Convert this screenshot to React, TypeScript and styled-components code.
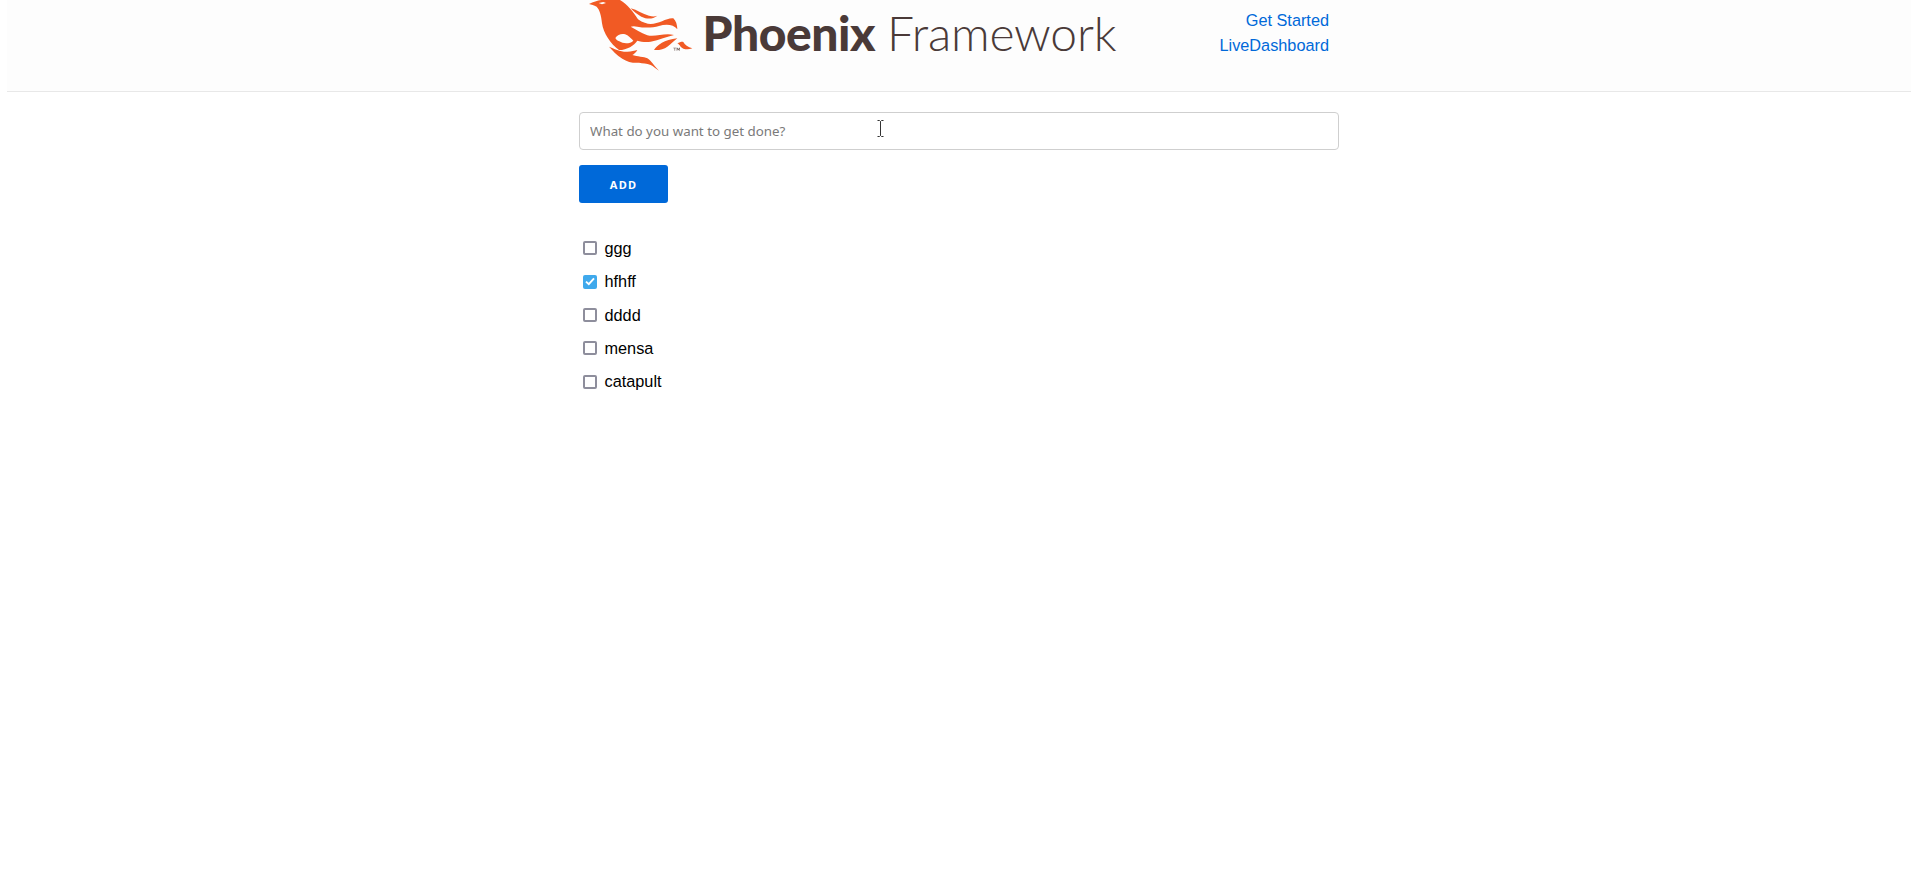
import React from 'react';
import styled, {createGlobalStyle} from 'styled-components';

const GlobalStyle = createGlobalStyle`
    html, body {
        margin: 0;
        padding: 0;
        background: #ffffff;
        font-family: "Liberation Sans", Arial, sans-serif;
    }
`;

const todos = [
    {id: 1, title: 'ggg', done: false},
    {id: 2, title: 'hfhff', done: true},
    {id: 3, title: 'dddd', done: false},
    {id: 4, title: 'mensa', done: false},
    {id: 5, title: 'catapult', done: false}
];

function Bird() {
    return (
        <BirdSvg viewBox="0 0 360 216">
            <g fill="#f15a24">
                {/* body, upper band and middle band */}
                <path d="M15 12 C28 6 40 2 52 0 L108 0 C130 12 148 36 162 58 C176 68 190 72 200 72 C225 72 250 52 268 55 C276 62 280 76 280 88 C268 72 245 72 225 78 C205 84 180 84 160 80 C152 78 146 78 140 80 C154 88 170 98 190 106 C215 112 240 98 270 105 C250 110 225 120 200 125 C185 127 170 125 160 122 C150 136 130 150 105 150 C80 132 58 100 54 70 C52 45 46 28 38 20 C30 16 22 14 15 12 Z" />
                <path d="M140 25 C160 30 175 42 195 47 C205 50 212 50 220 47 C205 58 190 58 172 50 C160 44 148 34 140 25 Z" />
                <path d="M210 150 C220 135 240 120 280 115 C270 122 262 132 250 140 C240 148 225 151 210 150 Z" />
                <path d="M280 130 C288 126 294 124 298 126 C302 134 312 142 325 145 C312 150 296 148 290 140 C287 136 284 132 280 130 Z" />
                <path d="M75 140 C90 146 110 156 130 155 C142 155 152 152 160 150 C156 158 150 162 145 165 C160 170 180 170 190 175 C202 182 210 198 225 212 C214 206 208 198 200 195 C188 190 176 190 165 188 C150 190 130 186 115 176 C98 166 86 152 75 140 Z" />
            </g>
            <path fill="#fdfdfd" d="M44 9 L58 6 L66 9 L54 13 Z" />
            <path fill="#fdfdfd" d="M94 114 C102 102 118 98 130 106 C138 112 144 118 148 122 C138 132 118 132 106 124 C100 122 96 118 94 114 Z" />
            <path fill="#6b5a55" d="M268 143 h9 v1.6 h-3.6 v7.4 h-1.8 v-7.4 h-3.6 Z M278 143 h2.4 l2.4 5 l2.4 -5 h2.4 v9 h-1.8 v-6 l-2.2 4.6 h-1.6 l-2.2 -4.6 v6 h-1.8 Z" />
        </BirdSvg>
    );
}

function ICursor() {
    return (
        <CursorSvg viewBox="0 0 7 17">
            <path d="M0.5 0.5 H2.5 L3.5 1.5 L4.5 0.5 H6.5 M3.5 1.5 V15.5 M0.5 16.5 H2.5 L3.5 15.5 L4.5 16.5 H6.5" fill="none" stroke="#333333" strokeWidth="1" />
        </CursorSvg>
    );
}

export default function App() {
    return (
        <>
            <GlobalStyle />
            <Header>
                <HeaderInner>
                    <Logo>
                        <Bird />
                        <LogoText>
                            <LogoBold>Phoenix</LogoBold>
                            <LogoLight>Framework</LogoLight>
                        </LogoText>
                    </Logo>
                    <Nav>
                        <NavLink href="#">Get Started</NavLink>
                        <NavLink href="#">LiveDashboard</NavLink>
                    </Nav>
                </HeaderInner>
            </Header>
            <Main>
                <InputWrap>
                    <TodoInput placeholder="What do you want to get done?" />
                    <ICursor />
                </InputWrap>
                <AddButton>ADD</AddButton>
                <TodoList>
                    {todos.map((todo) => (
                        <TodoRow key={todo.id}>
                            <Box $checked={todo.done}>
                                {todo.done && (
                                    <svg width="10" height="9" viewBox="0 0 10 9">
                                        <path d="M1 4.6 L3.8 7.2 L9 1.4" fill="none" stroke="#ffffff" strokeWidth="1.9" />
                                    </svg>
                                )}
                            </Box>
                            {todo.title}
                        </TodoRow>
                    ))}
                </TodoList>
            </Main>
        </>
    );
}

const Header = styled.header`
    box-sizing: border-box;
    height: 92px;
    margin: 0 7px;
    background: #fdfdfd;
    border-bottom: 1px solid #e8e8e8;
    overflow: hidden;
`;

const HeaderInner = styled.div`
    width: 760px;
    margin: 0 auto;
    display: flex;
    justify-content: space-between;
    padding: 0 10px 0 5px;
    box-sizing: border-box;
`;

const Logo = styled.div`
    display: flex;
    align-items: flex-start;
    height: 91px;
`;

const BirdSvg = styled.svg`
    width: 120px;
    height: 72px;
    flex: none;
`;

const LogoText = styled.div`
    display: flex;
    gap: 12px;
    margin-top: 4px;
    margin-left: -1.5px;
    color: #4a3a38;
    font-family: Lato, "Liberation Sans", sans-serif;
    font-size: 48px;
    line-height: 58px;
    white-space: nowrap;
`;

const LogoBold = styled.span`
    font-weight: 900;
    letter-spacing: -0.5px;
`;

const LogoLight = styled.span`
    font-weight: 300;
    letter-spacing: -0.2px;
`;

const Nav = styled.nav`
    display: flex;
    flex-direction: column;
    align-items: flex-end;
    padding-top: 8px;
`;

const NavLink = styled.a`
    color: #0069d9;
    font-size: 16.3px;
    line-height: 25px;
    text-decoration: none;
`;

const Main = styled.main`
    width: 760px;
    margin: 20px auto 0;
`;

const InputWrap = styled.div`
    position: relative;
`;

const CursorSvg = styled.svg`
    position: absolute;
    left: 298px;
    top: 8px;
    width: 7px;
    height: 17px;
`;

const TodoInput = styled.input`
    display: block;
    box-sizing: border-box;
    width: 100%;
    height: 38px;
    padding: 0 10px;
    border: 1px solid #cfcfcf;
    border-radius: 4px;
    background: #ffffff;
    outline: none;
    font-family: "Noto Sans", sans-serif;
    font-size: 13.33px;

    &::placeholder {
        color: #7a7a7a;
        opacity: 1;
    }
`;

const AddButton = styled.button`
    display: block;
    width: 89px;
    height: 38px;
    margin-top: 15px;
    padding: 0;
    border: 0;
    border-radius: 3px;
    background: #0069d9;
    color: #ffffff;
    font-family: "Noto Sans", sans-serif;
    font-size: 11px;
    font-weight: 700;
    letter-spacing: 1.2px;
`;

const TodoList = styled.ul`
    list-style: none;
    margin: 28.7px 0 0;
    padding: 0;
`;

const TodoRow = styled.li`
    display: flex;
    align-items: center;
    height: 33.35px;
    padding-left: 4px;
    gap: 7.5px;
    color: #000000;
    font-size: 16.3px;
`;

const Box = styled.span<{$checked: boolean}>`
    box-sizing: border-box;
    width: 14px;
    height: 14px;
    display: flex;
    align-items: center;
    justify-content: center;
    border-radius: 2px;
    border: ${(props) => (props.$checked ? '0' : '2px solid #8e8e9c')};
    background: ${(props) => (props.$checked ? '#3fa9ec' : '#ffffff')};
`;
